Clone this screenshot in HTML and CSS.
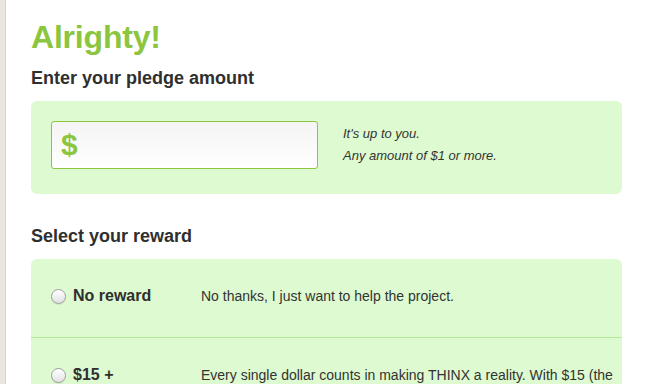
FILE: index.html
```html
<!DOCTYPE html>
<html lang="en">
<head>
  <meta charset="UTF-8">
  <meta name="viewport" content="width=device-width, initial-scale=1.0">
  <title>Alrighty! - Pledge</title>
  <link rel="stylesheet" href="styles.css">
</head>
<body>
  <div class="page">
    <h1 class="title">Alrighty!</h1>

    <h2 class="section-title">Enter your pledge amount</h2>
    <div class="panel pledge">
      <label class="amount">
        <span class="currency">$</span>
        <input type="text" class="amount-input" id="amountInput">
      </label>
      <div class="hint">
        <p>It's up to you.</p>
        <p>Any amount of $1 or more.</p>
      </div>
    </div>

    <h2 class="section-title">Select your reward</h2>
    <div class="panel rewards">
      <label class="reward">
        <span class="reward-name">
          <input type="radio" name="reward" class="radio">
          No reward
        </span>
        <span class="reward-desc">No thanks, I just want to help the project.</span>
      </label>
      <label class="reward">
        <span class="reward-name">
          <input type="radio" name="reward" class="radio">
          $15 +
        </span>
        <span class="reward-desc">Every single dollar counts in making THINX a reality. With $15 (the price of a coffee a week) you get our thanks and updates on the project.</span>
      </label>
    </div>
  </div>
</body>
</html>
```

FILE: styles.css
```css
body {
  margin: 0;
  background-color: #fff;
  color: #333;
  font-family: "Liberation Sans", Arial, sans-serif;
  border-left: 5px solid #e9e6df;
  min-height: 100vh;
}

.page {
  border-left: 1px solid #d6d3cc;
  min-height: 100vh;
  padding: 18px 47px 0 25px;
}

.title {
  margin: 0;
  font-size: 32px;
  line-height: 38px;
  font-weight: bold;
  color: #8cc63f;
  letter-spacing: -0.2px;
}

.section-title {
  margin: 11px 0 12px;
  font-size: 18px;
  line-height: 22px;
  font-weight: bold;
  color: #2f2f2f;
}

.panel {
  background-color: #ddfad0;
  border-radius: 6px;
}

.pledge {
  display: flex;
  align-items: center;
  gap: 25px;
  padding: 20px 20px 25px;
  margin-bottom: 31px;
}

.amount {
  display: flex;
  align-items: center;
  width: 256px;
  height: 46px;
  border: 1px solid #8cc63f;
  border-radius: 3px;
  background: linear-gradient(#f4f4f4, #fff);
  padding-left: 9px;
}

.currency {
  font-size: 30px;
  font-weight: bold;
  color: #8cc63f;
  line-height: 1;
}

.amount-input {
  flex: 1;
  min-width: 0;
  border: none;
  background: transparent;
  outline: none;
  font-family: inherit;
  font-size: 22px;
  color: #333;
}

.hint p {
  margin: 0;
  font-size: 13px;
  line-height: 22px;
  font-style: italic;
  color: #333;
}

.rewards {
  overflow: hidden;
}

.reward {
  display: flex;
  align-items: flex-start;
  padding: 27px 6px 31px 20px;
  border-bottom: 1px solid #b2eb98;
  cursor: pointer;
}

.reward:last-child { border-bottom: none; }

.reward-name {
  display: flex;
  align-items: center;
  gap: 7px;
  width: 150px;
  flex-shrink: 0;
  font-size: 16px;
  line-height: 20px;
  font-weight: bold;
  color: #2f2f2f;
}

.radio {
  appearance: none;
  -webkit-appearance: none;
  margin: 0;
  width: 15px;
  height: 15px;
  border-radius: 50%;
  border: 1px solid #9d9d9d;
  background: linear-gradient(#ffffff, #e2e2e2);
  box-shadow: inset 0 1px 1px rgba(255, 255, 255, 0.9), 0 1px 1px rgba(0, 0, 0, 0.08);
  flex-shrink: 0;
}

.radio:checked {
  background: radial-gradient(circle, #333 0 3px, #f2f2f2 4px);
}

.reward-desc {
  font-size: 14px;
  line-height: 20px;
  color: #333;
}
```
